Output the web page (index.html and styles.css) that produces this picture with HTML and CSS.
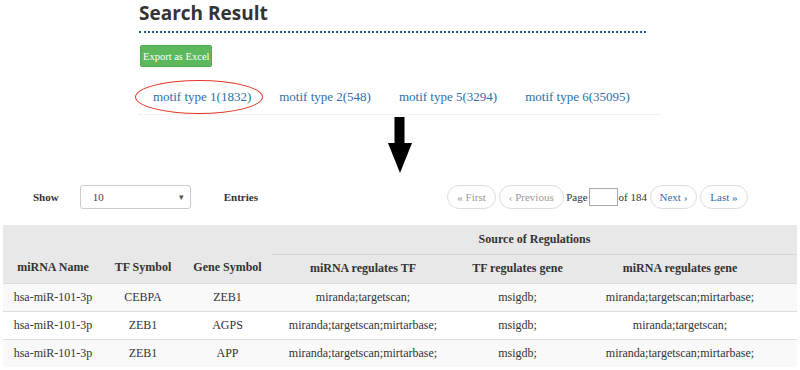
FILE: index.html
```html
<html>
<head>
    <title>Search Result</title>
    <link rel="stylesheet" href="styles.css">
</head>
<body>
    <div class="result-head">
        <h2>Search Result</h2>
        <button class="btn-excel">Export as Excel</button>
        <div class="motif-tabs">
            <span class="tab">motif type 1(1832)</span>
            <span class="tab">motif type 2(548)</span>
            <span class="tab">motif type 5(3294)</span>
            <span class="tab">motif type 6(35095)</span>
            <span class="mark"></span>
        </div>
    </div>

    <svg class="arrow" width="26" height="56" viewBox="0 0 26 56">
        <path d="M7.5 0 H17.5 V26 H25 L13 56 L1 26 H7.5 Z" fill="#000"/>
    </svg>

    <div class="controls">
        <span class="lbl">Show</span>
        <div class="select"><span>10</span><span class="caret">&#9662;</span></div>
        <span class="lbl entries">Entries</span>
        <div class="pager">
            <span class="pg off">&laquo; First</span>
            <span class="pg off">&lsaquo; Previous</span>
            <span class="txt">Page</span>
            <span class="page-box"></span>
            <span class="txt">of 184</span>
            <span class="pg">Next &rsaquo;</span>
            <span class="pg">Last &raquo;</span>
        </div>
    </div>

    <table class="result">
        <colgroup>
            <col style="width:100px">
            <col style="width:80px">
            <col style="width:89px">
            <col style="width:182px">
            <col style="width:127px">
            <col style="width:216px">
        </colgroup>
        <thead>
            <tr>
                <th rowspan="2" class="low">miRNA Name</th>
                <th rowspan="2" class="low">TF Symbol</th>
                <th rowspan="2" class="low">Gene Symbol</th>
                <th colspan="3">Source of Regulations</th>
            </tr>
            <tr class="sub">
                <th>miRNA regulates TF</th>
                <th>TF regulates gene</th>
                <th class="last">miRNA regulates gene</th>
            </tr>
        </thead>
        <tbody>
            <tr>
                <td>hsa-miR-101-3p</td>
                <td>CEBPA</td>
                <td>ZEB1</td>
                <td>miranda;targetscan;</td>
                <td>msigdb;</td>
                <td class="last">miranda;targetscan;mirtarbase;</td>
            </tr>
            <tr>
                <td>hsa-miR-101-3p</td>
                <td>ZEB1</td>
                <td>AGPS</td>
                <td>miranda;targetscan;mirtarbase;</td>
                <td>msigdb;</td>
                <td class="last">miranda;targetscan;</td>
            </tr>
            <tr>
                <td>hsa-miR-101-3p</td>
                <td>ZEB1</td>
                <td>APP</td>
                <td>miranda;targetscan;mirtarbase;</td>
                <td>msigdb;</td>
                <td class="last">miranda;targetscan;mirtarbase;</td>
            </tr>
        </tbody>
    </table>
</body>
</html>
```

FILE: styles.css
```css
body {
    margin: 0;
    font-family: "Liberation Serif", "Times New Roman", serif;
    color: #333;
    background: #fff;
}
.result-head {
    margin-left: 139px;
    width: 507px;
}
h2 {
    font-family: "Open Sans", Arial, sans-serif;
    font-weight: bold;
    font-size: 19px;
    line-height: 24px;
    margin: 0;
    padding: 1px 0 6px 0;
    color: #333;
    border-bottom: 2px dotted #285a98;
}
.btn-excel {
    display: block;
    margin-top: 12px;
    margin-left: 1px;
    height: 22px;
    padding: 0 2px;
    background: #5cb85c;
    color: #fff;
    border: 1px solid #4cae4c;
    border-radius: 2px;
    font-family: "Liberation Serif", serif;
    font-size: 10.5px;
}
.motif-tabs {
    position: relative;
    display: flex;
    margin-top: 13px;
    height: 34px;
    line-height: 34px;
    border-bottom: 1px dotted #e6e6e6;
    width: 522px;
}
.tab {
    padding: 0 14px;
    font-size: 13px;
    color: #2f6ea8;
}
.mark {
    position: absolute;
    left: -4px;
    top: 0;
    width: 126px;
    height: 32px;
    border: 1.5px solid #e23b28;
    border-radius: 50%;
}
.arrow {
    display: block;
    margin: 2px auto 0 auto;
}
.controls {
    display: flex;
    align-items: center;
    margin-top: 12px;
    height: 24px;
    padding-left: 33px;
    padding-right: 51px;
}
.lbl {
    font-weight: bold;
    font-size: 11px;
}
.select {
    display: flex;
    justify-content: space-between;
    align-items: center;
    box-sizing: border-box;
    width: 111px;
    height: 24px;
    margin-left: 21px;
    padding: 0 6px 0 12px;
    border: 1px solid #ccc;
    border-radius: 3px;
    font-size: 11px;
    color: #5a3a3a;
}
.caret {
    font-size: 9px;
    color: #555;
}
.entries {
    margin-left: 33px;
}
.pager {
    display: flex;
    align-items: center;
    margin-left: auto;
    font-size: 11px;
}
.pg {
    box-sizing: border-box;
    height: 24px;
    line-height: 22px;
    padding: 0 9px;
    margin: 0 1.5px;
    border: 1px solid #ddd;
    border-radius: 13px;
    color: #2f6ea8;
}
.pg.off {
    color: #999;
}
.txt {
    margin: 0 1px;
}
.page-box {
    box-sizing: border-box;
    width: 29px;
    height: 18px;
    border: 1px solid #a9a9a9;
}
.result {
    margin: 16px 3px 0 3px;
    width: 794px;
    border-collapse: collapse;
    table-layout: fixed;
    font-size: 12px;
}
.result th {
    background: #e8e8e8;
    font-weight: bold;
    height: 29px;
    padding: 0 8px;
    text-align: center;
    vertical-align: middle;
}
.result th.low {
    vertical-align: bottom;
    padding-bottom: 8px;
}
.result tr.sub th {
    height: 29px;
    border-top: 1px solid #d6d6d6;
}
.result td {
    height: 28px;
    padding: 0 8px;
    text-align: center;
    border-top: 1px solid #ddd;
}
.result tbody tr:nth-child(odd) td {
    background: #f9f9f9;
}
.result .last {
    padding-right: 26px;
}
```
